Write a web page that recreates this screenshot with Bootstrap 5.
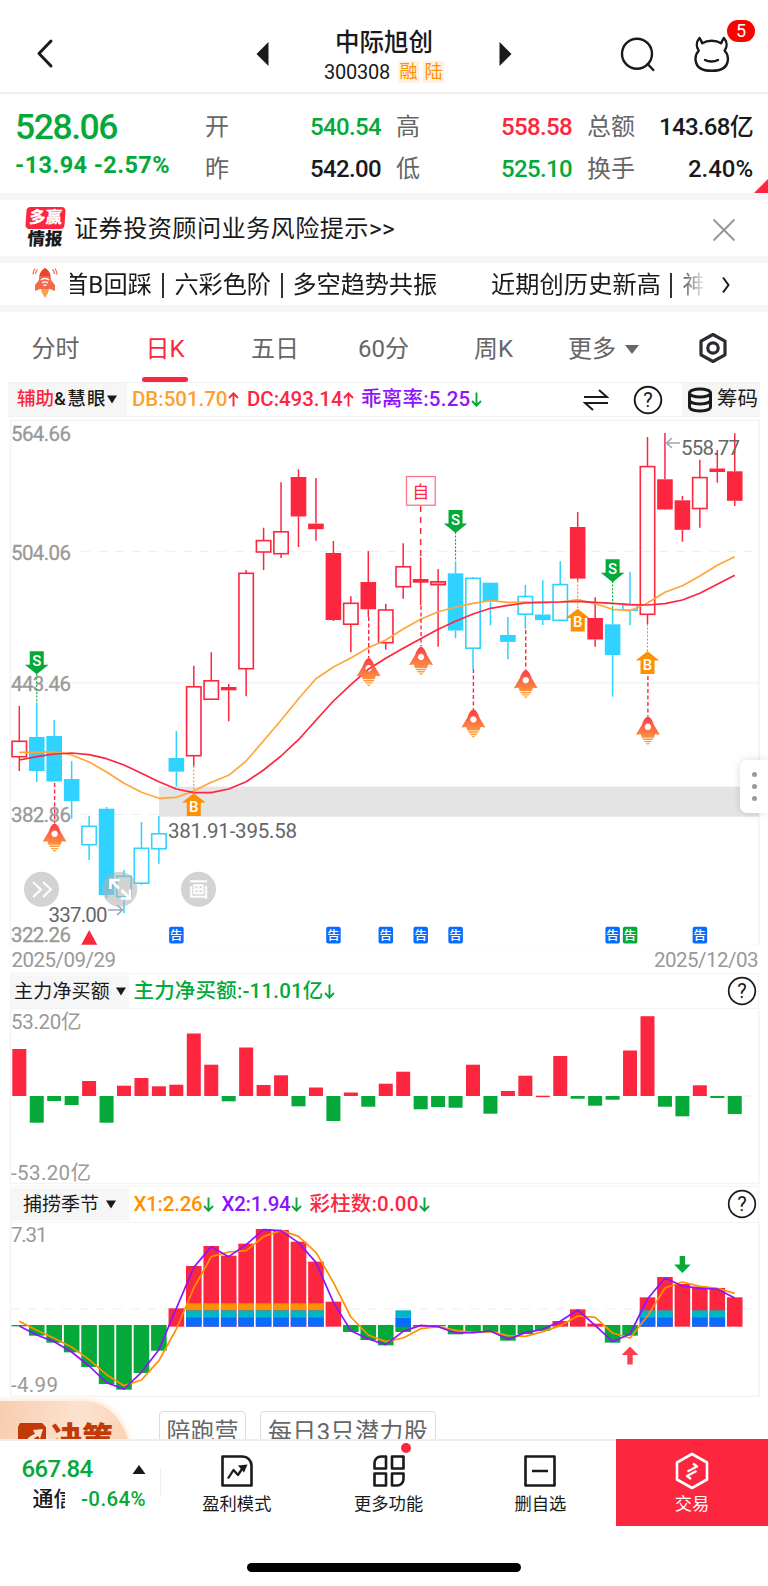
<!DOCTYPE html>
<html lang="zh-CN">
<head>
<meta charset="utf-8">
<meta name="viewport" content="width=device-width, initial-scale=1">
<title>中际旭创 300308</title>
<link href="https://cdn.jsdelivr.net/npm/bootstrap@5.3.0/dist/css/bootstrap.min.css" rel="stylesheet">
<script src="https://cdn.jsdelivr.net/npm/bootstrap@5.3.0/dist/js/bootstrap.bundle.min.js"></script>
<style>
:root{--up:#fd263f;--dn:#04a93a;--ink:#1a1a1a;--mute:#666}
body{font-family:Roboto,"Noto Sans CJK SC",sans-serif;color:var(--ink);background:#fff;width:768px;height:1586px;overflow:hidden;line-height:1}
svg{display:block;flex:none}
.up{color:var(--up)}.dn{color:var(--dn)}.mute{color:var(--mute)}
.or{color:#ffa02e}.pu{color:#9013fe}
[data-fit]{display:inline-block;white-space:nowrap;flex:none}
.topbar{height:94px;border-bottom:2px solid #eef0f0;padding:14px 34px 0 34px}
.topbar .side{width:190px}
.stockname{font-size:24.5px;font-weight:500;height:33px;line-height:30px}
.code{font-size:20px}
.tagbox{background:#fff1e0;color:#ff9100;font-size:18px;width:21px;height:22px;line-height:21px;text-align:center}
.unread{position:absolute;left:33px;top:-15px;width:28px;height:22px;border-radius:11px;background:#f00;color:#fff;font-size:18px;line-height:22px;text-align:center}
.quote{height:99px;padding:12px 15px 0;display:grid;grid-template-columns:190px 176px 176px 166px;column-gap:0;position:relative}
.quote .cells{display:grid;grid-template-rows:42px 42px}
.quote .cells>div{font-size:24px}
.quote .cells [data-fit]{font-weight:500;position:relative}
.quote .c2{margin-left:15px}.quote .c3{margin-left:30px;width:166px}
.price{font-size:35.5px;font-weight:500;height:44px;line-height:43px}
.chg{font-size:23.5px;font-weight:700;line-height:31px}
.corner{position:absolute;right:0;bottom:0;width:14px;height:14px;background:var(--up);clip-path:polygon(100% 0,100% 100%,0 100%)}
.strip{height:7px;background:#f6f6f6}
.notice{height:56px;padding:3px 31px 0 24px;font-size:24.2px}
.brandlogo{width:42px;margin-top:-4px}
.brandlogo .b1{background:var(--up);color:#fff;font-weight:900;font-size:16.5px;height:22px;line-height:21px;border-radius:4px;transform:skewX(-4deg);text-align:center;margin:0 1px 1px 2px}
.brandlogo .b2{font-weight:900;font-size:17.5px;line-height:18px;text-align:center;transform:skewX(-4deg)}
.ticker{height:42px;padding:2px 37px 0 32px;font-size:24.2px}
.marq{width:634px;overflow:hidden;white-space:nowrap;height:36px;line-height:36px;-webkit-mask-image:linear-gradient(90deg,#000 95.5%,transparent 100.5%);mask-image:linear-gradient(90deg,#000 95.5%,transparent 100.5%)}
.marq>div{margin-left:-6px}
.sep{flex:none;width:1.5px;height:25px;background:#333}
.periods{height:70px;font-size:24px;color:var(--mute);position:relative}
.periods span{height:70px;line-height:74px;position:relative}
.periods .on{color:var(--up)}
.periods .on u{text-decoration:none;position:relative;left:-1.500px}
.periods .on:after{content:"";position:absolute;left:-5px;width:46px;height:5px;border-radius:3px;background:var(--up);bottom:0}
.indic{height:35px;border:1px solid #f1f1f1;border-width:1px 0;margin:0 8px 0 8px;font-size:20.5px}
.indic>span,.panehead>span{font-weight:500;display:flex;align-items:center}
.pick{background:#f6f6f6;height:33px;font-weight:500}
.arr{flex:none;width:11px;height:15px;margin-left:0}
.dates{height:28px;padding:2px 10px 0 11.500px;font-size:20.5px;color:#999}
.pane{margin-left:10px;margin-right:9px;border:1.5px solid #f3f3f3}
.panehead{height:34px;font-size:20.5px}
.panehead .pick{width:118px;font-weight:400}
svg text{font-family:Roboto,"Noto Sans CJK SC",sans-serif}
.promo{height:42px;overflow:hidden;position:relative}
.blob{width:131px;height:60px;margin-top:4px;padding:21px 0 0 17px;border-radius:0 46px 0 0/0 60px 0 0;background:linear-gradient(100deg,#f7cdb0,#fce3d0 60%,#f9cfae);box-shadow:0 0 6px 2px #fde9d8;color:#c13a08;font-weight:900;font-size:31px}
.chip{border:1.5px solid #ddd;border-radius:4px;height:50px;margin-top:14px;font-size:24px;color:var(--mute);line-height:40px;text-align:center}
.tabbar{height:87px;border-top:2px solid #eee}
.tabbar .idx{width:161px;position:relative;font-weight:500}
.tabbar .it{flex:1 1 0;font-size:17.3px;padding-top:12px;position:relative}
.tabbar .it svg{margin-bottom:7px}
.trade{background:var(--up);color:#fff;margin-top:-2px}
.tabbar .trade{padding-top:14px}
.dot{position:absolute;width:10px;height:10px;border-radius:50%;background:var(--up);left:88px;top:2px}
.homebar{width:274px;height:9px;border-radius:5px;background:#000;margin:36.500px auto 0 247px}
.handle{position:absolute;right:0;top:760px;width:28px;height:53px;background:#fff;border-radius:7px 0 0 7px;box-shadow:0 0 8px rgba(0,0,0,.14)}
.handle i{width:5px;height:5px;border-radius:50%;background:#999}
</style>
</head>
<body class="m-0 position-relative">

<svg class="position-absolute" width="0" height="0"><symbol id="au" viewBox="0 0 11 15"><path d="M5.500 14.500V1.500M1 6l4.500-4.700L10 6" fill="none" stroke="currentColor" stroke-width="1.900"/></symbol><symbol id="ad" viewBox="0 0 11 15"><path d="M5.500.5v13M1 9l4.500 4.700L10 9" fill="none" stroke="currentColor" stroke-width="1.900"/></symbol></svg>

<header class="topbar d-flex justify-content-between">
  <div class="side pt-4"><svg width="20" height="32" viewBox="0 0 20 32" fill="none" stroke="#1a1a1a" stroke-width="3" stroke-linecap="round" stroke-linejoin="round"><path d="M17 3 5 15.500 17 28"/></svg></div>
  <div class="d-flex" style="width:256px">
    <svg class="mt-4" width="13" height="32" viewBox="0 0 13 32"><path d="M12.500 4v24L.5 16z" fill="#1a1a1a"/></svg>
    <div class="flex-grow-1 text-center" style="padding-top:14px">
      <div class="stockname">中际旭创</div>
      <div class="d-flex justify-content-center align-items-center gap-1"><span class="code me-1" data-fit="66">300308</span><span class="tagbox">融</span><span class="tagbox">陆</span></div>
    </div>
    <svg class="mt-4" width="13" height="32" viewBox="0 0 13 32"><path d="M.5 4v24l12-12z" fill="#1a1a1a"/></svg>
  </div>
  <div class="side d-flex justify-content-end gap-4" style="padding-top:21px">
    <svg style="margin-right:15px" width="36" height="38" viewBox="0 0 36 38" fill="none" stroke="#1a1a1a" stroke-width="2.400" stroke-linecap="round"><circle cx="18" cy="18.700" r="15"/><path d="m28.700 29 5.600 6"/></svg>
    <div class="position-relative pe-1"><svg width="36" height="38" viewBox="0 0 36 38" fill="none" stroke="#1a1a1a" stroke-width="2.400" stroke-linecap="round" stroke-linejoin="round"><path d="M5.500 3C2 7 2.200 12 4.700 15.700 1.600 19 1.200 22.500 1.600 25.500 2.500 33 8 35.800 17.700 35.800S33 33 33.800 25.500c.4-3 0-6.500-3.100-9.800C33.200 12 33.400 7 29.900 3c-.9 1.200-1.800 3-2.700 5.300-5.500-3.400-13.500-3.400-19 0C7.300 6 6.400 4.200 5.500 3z"/><path d="M11 25c3.500 1.900 9.500 1.900 13 0"/></svg><span class="unread">5</span></div>
  </div>
</header>

<section class="quote">
  <div><div class="price dn"><span data-fit="102">528.06</span></div><div class="chg dn"><span data-fit="155">-13.94 -2.57%</span></div></div>
  <div class="cells">
    <div class="d-flex justify-content-between align-items-center"><span class="mute">开</span><span class="dn" data-fit="71">540.54</span></div>
    <div class="d-flex justify-content-between align-items-center"><span class="mute">昨</span><span data-fit="71">542.00</span></div>
  </div>
  <div class="cells c2" style="width:176px">
    <div class="d-flex justify-content-between align-items-center"><span class="mute">高</span><span class="up" data-fit="71">558.58</span></div>
    <div class="d-flex justify-content-between align-items-center"><span class="mute">低</span><span class="dn" data-fit="71">525.10</span></div>
  </div>
  <div class="cells c3">
    <div class="d-flex justify-content-between align-items-center"><span class="mute">总额</span><span data-fit="94">143.68亿</span></div>
    <div class="d-flex justify-content-between align-items-center"><span class="mute">换手</span><span data-fit="65">2.40%</span></div>
  </div>
  <i class="corner"></i>
</section>
<div class="strip"></div>
<section class="notice d-flex align-items-center">
  <div class="brandlogo"><div class="b1">多赢</div><div class="b2">情报</div></div>
  <span class="ms-2" data-fit="321">证券投资顾问业务风险提示&gt;&gt;</span>
  <svg class="ms-auto" width="24" height="24" viewBox="0 0 24 24" stroke="#999" stroke-width="2"><path d="m.5 1.500 21 21m0-21-21 21"/></svg>
</section>
<div class="strip"></div>
<section class="ticker d-flex align-items-center">
  <svg style="margin-top:-4px" width="26" height="32" viewBox="0 0 26 32"><path d="M13 1c5 3 6 8 6 12l4 5v6l-5-2H8l-5 2v-6l4-5C7 9 8 4 13 1z" fill="#f5694a"/><path d="M9 22h8l-1 4-3 5-3-5z" fill="#fba04f"/><path d="M13 1c3.500 2 5 5 5.600 8H7.400C8 6 9.500 3 13 1z" fill="#e8452f"/><g fill="none" stroke="#fff" stroke-width="1.300"><path d="M9 13c2-2 6-2 8 0M10 16c2-1.500 4-1.500 6 0M11.500 18.500c1-.7 2-.7 3 0"/></g><g fill="none" stroke="#f5694a" stroke-width="1.200"><path d="M5.500 2.500C4 4 3.600 5.500 3.500 7M3 1.500C1.500 3.500 1 5.500 1 7.500M20.500 2.500C22 4 22.400 5.500 22.500 7M23 1.500c1.500 2 2 4 2 6"/></g></svg>
  <div class="marq" style="margin-left:12px"><div class="d-flex align-items-center">
    <span data-fit="88">首B回踩</span><i class="sep" style="margin:0 11px 0 10px"></i><span data-fit="96.500">六彩色阶</span><i class="sep" style="margin:0 10px 0 10px"></i><span data-fit="144.500">多空趋势共振</span><span data-fit="170" style="margin-left:54px">近期创历史新高</span><i class="sep" style="margin:0 11px 0 9px"></i><span>神</span></div></div>
  <svg style="margin-left:18px" width="10" height="18" viewBox="0 0 10 18" fill="none" stroke="#1a1a1a" stroke-width="2"><path d="m2 1.500 5.500 7.500L2 16.500"/></svg>
</section>
<div class="strip"></div>
<nav class="periods d-flex">
  <span style="margin-left:31.500px;width:115.500px">分时</span><span class="on" style="width:104px"><u>日K</u></span><span style="width:107px">五日</span><span style="width:116px">60分</span><span style="width:94px">周K</span><span style="width:57px">更多</span>
  <svg width="14" height="9" viewBox="0 0 14 9" style="margin-top:33px"><path d="M0 0h14L7 9z" fill="#666"/></svg>
  <svg style="margin-left:59px;margin-top:20px" width="30" height="32" viewBox="0 0 30 32" fill="none" stroke="#2a2c30" stroke-width="3.200" stroke-linejoin="round"><path d="M15 2.500 27 9.200v13.600L15 29.500 3 22.800V9.200z"/><circle cx="15" cy="16" r="5.200"/></svg>
</nav>

<div class="indic d-flex align-items-center">
  <div class="pick d-flex align-items-center" style="width:119px;padding-left:9px;font-size:18.500px"><span class="up" data-fit="37">辅助</span><span data-fit="53">&amp;慧眼</span><svg class="ms-0" width="10" height="9" viewBox="0 0 10 8"><path d="M0 0h10L5 8z" fill="#1a1a1a"/></svg></div>
  <span class="or" style="margin-left:5px;width:115px"><span data-fit="95.500">DB:501.70</span><svg class="arr up"><use href="#au"/></svg></span>
  <span class="up" style="width:114px"><span data-fit="95.500">DC:493.14</span><svg class="arr"><use href="#au"/></svg></span>
  <span class="pu"><span data-fit="109.500">乖离率:5.25</span><svg class="arr dn"><use href="#ad"/></svg></span>
  <svg style="margin-left:101px" width="26" height="24" viewBox="0 0 26 24" fill="none" stroke="#1a1a1a" stroke-width="2"><path d="M1 9h23l-8-7M25 15H2l8 7"/></svg>
  <svg style="margin-left:24.500px" width="30" height="30" viewBox="0 0 30 30"><circle cx="15" cy="15" r="13.300" fill="none" stroke="#1a1a1a" stroke-width="1.900"/><text x="15" y="22" font-size="20" text-anchor="middle" fill="#1a1a1a">?</text></svg>
  <div class="pick ms-auto d-flex align-items-center" style="width:78px;padding-left:5px;font-weight:400"><svg width="26" height="26" viewBox="0 0 26 26" fill="none" stroke="#1a1a1a" stroke-width="3"><ellipse cx="13" cy="6" rx="10.500" ry="4"/><path d="M2.500 6v14c0 5.200 21 5.200 21 0V6M2.500 13c0 5.200 21 5.200 21 0"/></svg><span class="ms-1" data-fit="41">筹码</span></div>
</div>

<svg id="kline" width="768" height="528" viewBox="0 417 768 528"></svg>
<div class="dates d-flex justify-content-between align-items-center"><span data-fit="104">2025/09/29</span><span data-fit="104">2025/12/03</span></div>

<div class="pane panehead d-flex align-items-center" style="height:36px">
  <div class="pick d-flex align-items-center" style="padding-left:3px;font-size:19px;height:33px"><span data-fit="96">主力净买额</span><svg style="margin-left:6px" width="10" height="9" viewBox="0 0 10 8"><path d="M0 0h10L5 8z" fill="#1a1a1a"/></svg></div>
  <span class="dn" style="margin-left:4.500px"><span data-fit="190">主力净买额:-11.01亿</span><svg class="arr"><use href="#ad"/></svg></span>
  <svg class="ms-auto" style="margin-right:1px" width="30" height="30" viewBox="0 0 30 30"><circle cx="15" cy="15" r="13.300" fill="none" stroke="#1a1a1a" stroke-width="1.700"/><text x="15" y="22" font-size="20" text-anchor="middle" fill="#1a1a1a">?</text></svg>
</div>
<svg id="flow" width="768" height="177" viewBox="0 1009 768 177"></svg>
<div class="pane panehead d-flex align-items-center" style="height:37px;padding-bottom:1px">
  <div class="pick d-flex align-items-center" style="padding-left:12px;font-size:19px"><span data-fit="76">捕捞季节</span><svg style="margin-left:7px" width="10" height="9" viewBox="0 0 10 8"><path d="M0 0h10L5 8z" fill="#1a1a1a"/></svg></div>
  <span style="margin-left:4.500px;width:88px;color:#ff9100"><span data-fit="69">X1:2.26</span><svg class="arr dn"><use href="#ad"/></svg></span>
  <span class="pu" style="width:88px"><span data-fit="69">X2:1.94</span><svg class="arr dn"><use href="#ad"/></svg></span>
  <span class="up"><span data-fit="109">彩柱数:0.00</span><svg class="arr dn"><use href="#ad"/></svg></span>
  <svg class="ms-auto" style="margin-right:1px" width="30" height="30" viewBox="0 0 30 30"><circle cx="15" cy="15" r="13.300" fill="none" stroke="#1a1a1a" stroke-width="1.700"/><text x="15" y="22" font-size="20" text-anchor="middle" fill="#1a1a1a">?</text></svg>
</div>
<svg id="season" width="768" height="174" viewBox="0 1223 768 174"></svg>

<section class="promo d-flex">
  <div class="blob d-flex align-items-start gap-1"><svg width="30" height="30" viewBox="0 0 30 30"><path d="M3 1h22l4 4v24H4l-3-4V5z" fill="#c13a08"/><path d="M6 27c1-8 6-13 12-15l-2-4 10-1-3 10-2-3c-5 2-7 7-7 13z" fill="#fce0cc"/></svg><span style="line-height:34px">决策</span></div>
  <div class="chip" style="margin-left:28px;width:87px">陪跑营</div>
  <div class="chip" style="margin-left:14px;width:176px"><span data-fit="160">每日3只潜力股</span></div>
</section>

<footer class="tabbar d-flex">
  <div class="idx">
    <div class="d-flex justify-content-between align-items-center" style="padding:16px 15px 0 21.500px;font-size:24px"><span class="dn" data-fit="71">667.84</span><svg width="14" height="9" viewBox="0 0 13 9"><path d="M6.500 0 13 9H0z" fill="#1a1a1a"/></svg></div>
    <div class="d-flex align-items-center" style="padding:6px 0 0 32.500px"><span class="overflow-hidden" style="width:32.500px;font-size:21px;white-space:nowrap;line-height:24px">通信</span><span class="dn" style="margin-left:16px;font-size:20.500px" data-fit="65">-0.64%</span></div>
    <i style="position:absolute;right:0;top:28px;width:1px;height:27px;background:#eee"></i>
  </div>
  <div class="it d-flex flex-column align-items-center"><svg width="36" height="36" viewBox="0 0 36 36" fill="none" stroke="#1a1a1a" stroke-width="2.600" stroke-linejoin="round"><path d="M3.500 3.500h20a9 9 0 0 1 9 9v20h-29z"/><path d="m9 25.500 5.500-8.500 4.500 5 6-9" stroke-width="2.300"/><path d="m19 12.500 9.500-1-3.500 8z" fill="#1a1a1a" stroke="none"/></svg>盈利模式</div>
  <div class="it d-flex flex-column align-items-center"><svg width="36" height="36" viewBox="0 0 36 36" fill="none" stroke="#1a1a1a" stroke-width="2.600" stroke-linejoin="round"><path d="M10 3.500h5v12H3.500V10a6.500 6.500 0 0 1 6.500-6.500zM21 3.500h11.500v12H21zM3.500 20.500H15v12H3.500zM21 20.500h11.500V26a6.500 6.500 0 0 1-6.500 6.500h-5z"/></svg>更多功能<i class="dot"></i></div>
  <div class="it d-flex flex-column align-items-center"><svg width="36" height="36" viewBox="0 0 36 36" fill="none" stroke="#1a1a1a" stroke-width="2.600" stroke-linejoin="round"><path d="M3.500 3.500h29v29h-29zM10 18h16"/></svg>删自选</div>
  <div class="it trade d-flex flex-column align-items-center"><svg width="36" height="38" viewBox="0 0 36 38" fill="none" stroke="#fff" stroke-width="2.600" stroke-linejoin="round" style="margin-top:-1px;margin-bottom:6px"><path d="M18 2 33 10.500v17L18 36 3 27.500v-17z"/><path d="M13.500 19.500 23 14.500l-4-3M22.500 19l-9.500 5 4 3" stroke-width="2.300"/></svg>交易</div>
</footer>
<div class="homebar"></div>
<div class="handle d-flex flex-column align-items-center justify-content-center pe-0" style="gap:6.600px"><i></i><i></i><i></i></div>

<script>
const UP='#fd263f',DN='#04a93a',CY='#30d2ff';
const X=i=>19.3+17.45*i;
const r=(x,y,w,h,f,e='')=>`<rect x="${x}" y="${y}" width="${w}" height="${h}" fill="${f}" ${e}/>`;
const l=(x1,y1,x2,y2,c,w=1.3,e='')=>`<path d="M${x1} ${y1}L${x2} ${y2}" stroke="${c}" stroke-width="${w}" fill="none" ${e}/>`;
const t=(s,x,y,w,c='#999',e='')=>`<text x="${x}" y="${y}" font-size="20.500" fill="${c}" textLength="${w}" ${e}>${s}</text>`;
const line=(a,c,w,f=v=>v)=>`<polyline points="${a.map((v,i)=>X(i)+','+f(v)).join(' ')}" fill="none" stroke="${c}" stroke-width="${w}" stroke-linejoin="round"/>`;

// high, body top, body bottom, low, kind: R hollow red, F solid red, C solid cyan, H hollow cyan
const K=[[706,741,757,771,'R'],[702.7,737,771,782,'C'],[720,736,781.5,781.5,'C'],[761,779,801,818.7,'C'],[816,826,845,860,'H'],[807,808.7,895,898,'C'],[870,876,897,913,'H'],[822,848,883.5,885,'H'],[816,833.5,849,863.7,'H'],[731,758,771.7,786.7,'C'],[665.7,686.5,756,766,'R'],[652.3,680.5,699.500,699.5,'R'],[684,687,690.3,721.3,'F'],[570,573,669,696.3,'R'],[527.7,540.3,552.3,570,'R'],[482.3,531.5,554,558,'R'],[469.3,477,516.5,547,'F'],[478,523.6,529.2,540.7,'F'],[541,553,620,621,'F'],[596.3,603,624.5,652.3,'R'],[551,582,609.3,617,'F'],[603.7,609.7,643,649.7,'R'],[543.3,566.5,587,598.7,'R'],[557.3,579,582.700,605.3,'F'],[569,581.5,585,646.7,'R'],[561.3,573.3,630.5,638.3,'C'],[577,578,648.5,669,'H'],[582.7,582.7,601.5,625.3,'C'],[617,635,641.9,659.3,'C'],[585,596.2,614.5,629,'H'],[580.3,614.5,620.2,625,'C'],[561.3,584.3,620.6,620.6,'H'],[512,527,578.6,580.7,'F'],[597.3,618,639.5,646.7,'F'],[611,624.3,655,696.7,'C'],[571.7,604.3,610.5,625.3,'H'],[437,466.3,614.6,624,'R'],[433,479.3,509.5,510,'F'],[496,500.3,529.8,541.7,'F'],[459.7,477.3,508.8,527.7,'R'],[450,468.5,472,482.7,'F'],[433.3,471.3,500.8,506,'F']];
const A=[752.3,752.3,751.7,755,762,772,783.3,792.3,798.3,797.3,791,782.3,775.3,761,740.7,720.3,698.7,678.7,667,658,647.7,640,629,619.3,611.7,607.3,603.3,600.7,602.3,602,602.3,602,599.7,603.7,609.3,610.7,603,592.3,585.7,576,565.3,556.7];
const B=[760,756.7,754,753,754.7,758.7,765,773.3,781.7,789,792.7,792.7,789,781.7,770,756,739.7,720.3,701,684.7,669.3,658.3,648.3,638.7,629.3,621.3,614,608.3,605.3,603,602.3,602,601.3,602.3,603.3,604.7,605,603.7,600,593.3,584.3,575.3];

let s=`<defs><linearGradient id="rk" x1="0" y1="0" x2="0" y2="1"><stop offset="0" stop-color="#fb3a48"/><stop offset="1" stop-color="#ffb13c"/></linearGradient>
<symbol id="rocket" viewBox="0 0 24 29"><path fill="url(#rk)" fill-rule="evenodd" d="M12 0c3 1.200 4.800 4.500 6 8.500L24 18.500l-4.800-.5-1.200 3.500H6L4.800 18 0 18.500 6 8.500C7.200 4.500 9 1.200 12 0zm0 7.300a3.200 3.200 0 1 0 .01 0zM6.300 22.300h11.400l-1 1.500H7.300zM7.900 24.600h8.200l-1 1.300H8.900zM9.600 26.700h4.800L12 28.800z"/></symbol></defs>`;
s+=r(10.5,420.5,748.500,525,'none','stroke="#f3f3f3" stroke-width="1.500"');
s+=r(159,786.7,600,30,'#e4e4e4');
s+=l(11,682.7,759,682.7,'#f3f3f3',1.5)+l(81,551.4,752,551.4,'#ededed',1,'stroke-dasharray="9 8"')+l(81,814.400,160,814.400,'#ededed',1,'stroke-dasharray="9 8"');
[['564.66',441],['504.06',559.5],['443.46',691],['382.86',822],['322.26',941.7]].forEach(a=>s+=t(a[0],11,a[1],60,'#999','stroke="#999" stroke-width=".3"'));
K.forEach(([h,a,b,lo,k],i)=>{const x=X(i),c='RF'.includes(k)?UP:CY;
 s+=l(x,h,x,a,c,1.500)+l(x,b,x,lo,c,1.500);
 if(k=='R'||k=='H')s+=r(x-7.2,a+.3,14.4,b-a-.6,i==24?'#fda0aa':'none',`stroke="${c}" stroke-width="1.600"`);else s+=r(x-7.8,a,15.6,b-a,c);});
s+=l(X(23),579,X(23),583,UP);
s+=line(A,'#ffa63a',1.7)+line(B,UP,1.7);
// dotted leader lines from a candle to its marker
[[1,674,703,DN],[25,532,561,DN],[34,581,611,DN],[10,766,794,'#ff9100'],[32,581,609,'#ff9100'],[36,624,652,'#ff9100']].forEach(a=>s+=l(X(a[0]),a[1],X(a[0]),a[2],a[3],1.1,'stroke-dasharray="2 1.600"'));
[[2,783,823.3],[20,617,657.700],[23,606,646.500],[26,669,709],[29,630,669.700],[36,676,716.300]].forEach(a=>{const x=X(a[0]);s+=l(x+.4,a[1],x+.4,a[2],UP,1.4,'stroke-dasharray="4 2.500"')+`<use href="#rocket" x="${x-11.6}" y="${a[2]}" width="24" height="29"/>`});
s+=l(X(23),506,X(23),557,UP,1.5,'stroke-dasharray="6 5"')+r(406.500,476.500,28.700,28.700,'#fff','stroke="#fb7583" stroke-width="1.300"')+`<text x="420.800" y="497.500" font-size="17" text-anchor="middle" fill="${UP}">自</text>`;
[[1,651.3],[25,510],[34,559.3]].forEach(a=>{const x=X(a[0]),y=a[1];s+=`<path d="M${x-7} ${y}h14v13.500h4.800L${x} ${y+23}L${x-11.800} ${y+13.500}h4.800z" fill="${DN}"/><text x="${x}" y="${y+14.500}" font-size="15" font-weight="500" text-anchor="middle" fill="#fff">S</text>`});
[[10,793.3],[32,608.7],[36,651.3]].forEach(a=>{const x=X(a[0]),y=a[1];s+=`<path d="M${x} ${y}L${x+11.800} ${y+9.300}h-4.800v13.400h-14v-13.400h-4.800z" fill="#ff9100"/><text x="${x}" y="${y+18.500}" font-size="15" font-weight="500" text-anchor="middle" fill="#fff">B</text>`});
s+=`<path d="M89.200 930l8 14.700h-16z" fill="${UP}"/>`;
[9,18,21,23,25,34,35,39].forEach(i=>s+=r(X(i)-7.2,926.7,14.5,16.8,i==35?DN:'#0a6cff','rx="2"')+`<text x="${X(i)}" y="939.600" font-size="12.500" font-weight="500" text-anchor="middle" fill="#fff">告</text>`);
s+=`<path d="M680 443h-13m5-5-5.500 5 5.500 5M108 910h14m-5-5 5.500 5-5.500 5" fill="none" stroke="#9aa6ba" stroke-width="1.500"/>`;
s+=t('558.77',681,455,59,'#666')+t('381.91-395.58',168,837.7,129,'#666')+t('337.00',48.5,921.5,59,'#666');
[41.5,119.8,198.5].forEach(x=>s+=`<circle cx="${x}" cy="889.300" r="17.500" fill="#b4b4b4" fill-opacity=".58"/>`);
s+=`<g fill="none" stroke="#fff" stroke-width="2"><path d="m33 882 8 7.500-8 7.500M43 882l8 7.500-8 7.500"/><path stroke-width="2.500" d="M110.500 889v-9h9M111 880.500l8 8M130 889.500v9h-9M129.500 898l-8-8"/></g><text x="198.500" y="896.500" font-size="20" text-anchor="middle" fill="#fff" stroke="#fff" stroke-width=".4">画</text>`;
kline.innerHTML=s;

// net buying, px from the zero line; positive is up
const N=[47,-26.7,-5,-9,15,-26.7,10.3,18,9.7,11.3,62.5,31.3,-5.3,48.5,11,20.7,-10.3,8.5,-25,3.5,-10.7,12.3,24.3,-13.3,-11,-11.7,31.3,-17.7,5,20.3,0,40,-2.700,-9.7,-3.7,45.5,79.8,-10.7,-20.3,10.7,-2,-18];
s=r(10.5,1005,748.500,178.500,'none','stroke="#f3f3f3" stroke-width="1.500"')+l(700,1096,752,1096,'#eee',1);
N.forEach((v,i)=>s+=v>0?r(X(i)-7,1096-v,14,v,UP):v<0?r(X(i)-7,1096,14,-v,DN):r(X(i)-7,1095.700,14,1.5,UP));
s+=t('53.20亿',11,1029,70.500)+t('-53.20亿',11,1179.500,80);
flow.innerHTML=s;

const Y=v=>1185+v/3;
const V=[424,452,473,502,546,597,614,564,497,370,243,183,212,176,132,135,170,230,350,441,465,481,441,420,424,448,443,442,467,447,437,408,373,416,473,452,337,276,297,305,309,337];
const O=[409,436,460,486,524,569,602,585,527,432,309,215,201,197,155,136,154,202,292,396,450,470,459,431,425,436,442,440,452,454,440,422,393,397,444,459,393,309,291,304,310,325];
const P=[423,450,470,501,543,593,612,562,494,370,247,185,215,179,134,137,173,232,352,437,462,479,439,421,425,444,443,438,463,443,433,409,375,421,470,447,342,279,303,310,312,339];
s=r(10.5,1215,748.500,181.5,'none','stroke="#f3f3f3" stroke-width="1.500"')+l(11,1309,752,1309,'#ededed',1,'stroke-dasharray="9 8"');
V.forEach((v,i)=>{const x=X(i)-7.8;
 s+=v>421?r(x,Y(420),15.6,(v-420)/3,DN):r(x,Y(v),15.6,(425-v)/3,UP);
 if(i>9&&i<18)s+=r(x,Y(355),15.6,7,'#ff9100');
 if(i>9&&i<18||[22,36,37,39,40].includes(i))s+=r(x,Y(376),15.6,7.400,'#00b5c4')+r(x,Y(398),15.6,9,'#0a6cff');});
s+=line(O,'#ff9100',1.7,Y)+line(P,'#9013fe',1.7,Y);
s+=`<path d="M679.700 1256h5.400v8.500h5.600l-8.300 8.500-8.300-8.500h5.600z" fill="${DN}"/><path d="M630 1346.500l8.300 8.500h-5.600v9.500h-5.400v-9.500h-5.600z" fill="#ff3f4b"/>`;
s+=t('7.31',11,1241.700,36.5)+t('-4.99',11,1392.300,47);
season.innerHTML=s;

// spread each data-fit text over its given width
document.querySelectorAll('[data-fit]').forEach(e=>{const w=e.getBoundingClientRect().width;e.style.letterSpacing=((+e.dataset.fit-w)/e.textContent.length)+'px'});
</script>
</body>
</html>
